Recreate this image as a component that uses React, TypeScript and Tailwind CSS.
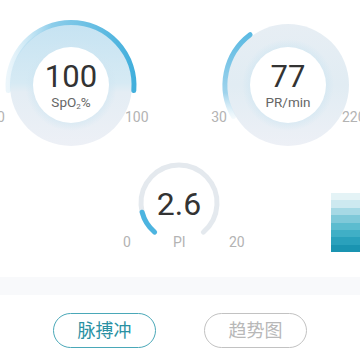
const bands = ['#e4f3f6', '#cde9f0', '#a6d9e5', '#7fc9d9', '#5cbccf', '#40afc6', '#2aa1bc', '#1a94b1'];

type BigGaugeProps = {
  value: string;
  unit: React.ReactNode;
  min: string;
  max: string;
  arc: 'spo2' | 'pr';
};

const BigGauge = ({ value, unit, min, max, arc }: BigGaugeProps) => {
  const id = arc;
  return (
    <div className="relative h-[140px] w-[170px] shrink-0">
      <svg className="absolute inset-0" width="170" height="140" viewBox="0 0 170 140">
        <defs>
          <linearGradient id={`${id}-disk`} x1="0" y1="0" x2="0" y2="1">
            {arc === 'spo2' ? (
              <>
                <stop offset="0%" stopColor="#c6e3f2" />
                <stop offset="48%" stopColor="#d6eaf4" />
                <stop offset="56%" stopColor="#e4edf4" />
                <stop offset="100%" stopColor="#edf0f6" />
              </>
            ) : (
              <>
                <stop offset="0%" stopColor="#e7eef4" />
                <stop offset="50%" stopColor="#e1ecf3" />
                <stop offset="100%" stopColor="#edf0f6" />
              </>
            )}
          </linearGradient>
          <radialGradient id={`${id}-glow`} cx="0.5" cy="0.5" r="0.5">
            <stop offset="70%" stopColor="#cfe6f2" stopOpacity="0.9" />
            <stop offset="100%" stopColor="#cfe6f2" stopOpacity="0" />
          </radialGradient>
          {arc === 'spo2' ? (
            <linearGradient id={`${id}-arc`} gradientUnits="userSpaceOnUse" x1="22" y1="0" x2="148" y2="0">
              <stop offset="0%" stopColor="#cfe8f5" stopOpacity="0.4" />
              <stop offset="35%" stopColor="#8ccdea" />
              <stop offset="100%" stopColor="#42afdc" />
            </linearGradient>
          ) : (
            <linearGradient id={`${id}-arc`} gradientUnits="userSpaceOnUse" x1="0" y1="18" x2="0" y2="110">
              <stop offset="0%" stopColor="#5ab9e2" />
              <stop offset="65%" stopColor="#9fd3ec" />
              <stop offset="100%" stopColor="#d8ecf6" stopOpacity="0" />
            </linearGradient>
          )}
        </defs>
        <circle cx="85" cy="70" r="61" fill={`url(#${id}-disk)`} />
        <circle cx="85" cy="70" r="46" fill={`url(#${id}-glow)`} />
        <circle cx="85" cy="70" r="38" fill="#ffffff" />
        {arc === 'spo2' ? (
          <path
            d="M 22.2 75.5 A 63 63 0 1 1 147.8 75.5"
            fill="none"
            stroke={`url(#${id}-arc)`}
            strokeWidth="5"
            strokeLinecap="round"
          />
        ) : (
          <path
            d="M 47.1 19.7 A 63 63 0 0 0 30.4 101.5"
            fill="none"
            stroke={`url(#${id}-arc)`}
            strokeWidth="5"
            strokeLinecap="round"
          />
        )}
      </svg>
      <div className="absolute left-0 right-0 top-[46px] flex flex-col items-center">
        <span className="text-[31px] leading-none text-[#333333]">{value}</span>
        <span className="mt-[4px] text-[13.5px] leading-none text-[#666666]">{unit}</span>
      </div>
      <span
        className={
          arc === 'spo2'
            ? 'absolute right-[151px] top-[95px] text-[14px] leading-none text-[#b3b3b3]'
            : 'absolute right-[146px] top-[95px] text-[14px] leading-none text-[#b3b3b3]'
        }
      >
        {min}
      </span>
      <span className="absolute left-[139px] top-[95px] text-[14px] leading-none text-[#b3b3b3]">{max}</span>
    </div>
  );
};

const PiGauge = () => (
  <div className="relative h-[100px] w-[120px] shrink-0">
    <svg className="absolute inset-0" width="120" height="100" viewBox="0 0 120 100">
      <path
        d="M 35.6 77.1 A 38 38 0 1 1 84.4 77.1"
        fill="none"
        stroke="#e4e9ee"
        strokeWidth="5"
        strokeLinecap="round"
      />
      <path
        d="M 35.6 77.1 A 38 38 0 0 1 23.1 57.2"
        fill="none"
        stroke="#4cb4e0"
        strokeWidth="5"
        strokeLinecap="round"
      />
    </svg>
    <div className="absolute left-0 right-0 top-[33px] flex justify-center">
      <span className="text-[32px] leading-none text-[#333333]">2.6</span>
    </div>
    <span className="absolute left-[4px] top-[80px] text-[14px] leading-none text-[#b3b3b3]">0</span>
    <span className="absolute left-[54px] top-[80px] text-[14px] leading-none text-[#b3b3b3]">PI</span>
    <span className="absolute left-[110px] top-[80px] text-[14px] leading-none text-[#b3b3b3]">20</span>
  </div>
);

const App = () => {
  return (
    <div className="h-[360px] w-[360px] overflow-hidden bg-white font-['Roboto','Noto_Sans_CJK_SC',sans-serif]">
      <div className="ml-[-14px] flex gap-[47px] pt-[15px]">
        <BigGauge
          arc="spo2"
          value="100"
          unit={
            <>
              SpO<sub className="text-[8px]">2</sub>%
            </>
          }
          min="70"
          max="100"
        />
        <BigGauge arc="pr" value="77" unit="PR/min" min="30" max="220" />
      </div>

      <div className="flex pl-[119px]">
        <PiGauge />
        <div className="ml-auto mt-[38px] flex h-[59px] w-[29px] flex-col">
          {bands.map((c) => (
            <div key={c} className="flex-1" style={{ backgroundColor: c }} />
          ))}
        </div>
      </div>

      <div className="mt-[22px] h-[18px] bg-[#f8f9fb]" />

      <div className="mt-[18px] flex justify-center gap-[48px]">
        <button className="h-[35px] w-[103px] rounded-full border-[1.5px] border-[#4aa8b8] text-[18px] text-[#2a91a3]">
          脉搏冲
        </button>
        <button className="h-[35px] w-[103px] rounded-full border-[1.5px] border-[#c2c2c2] text-[18px] text-[#b8b8b8]">
          趋势图
        </button>
      </div>
    </div>
  );
};

export default App;
